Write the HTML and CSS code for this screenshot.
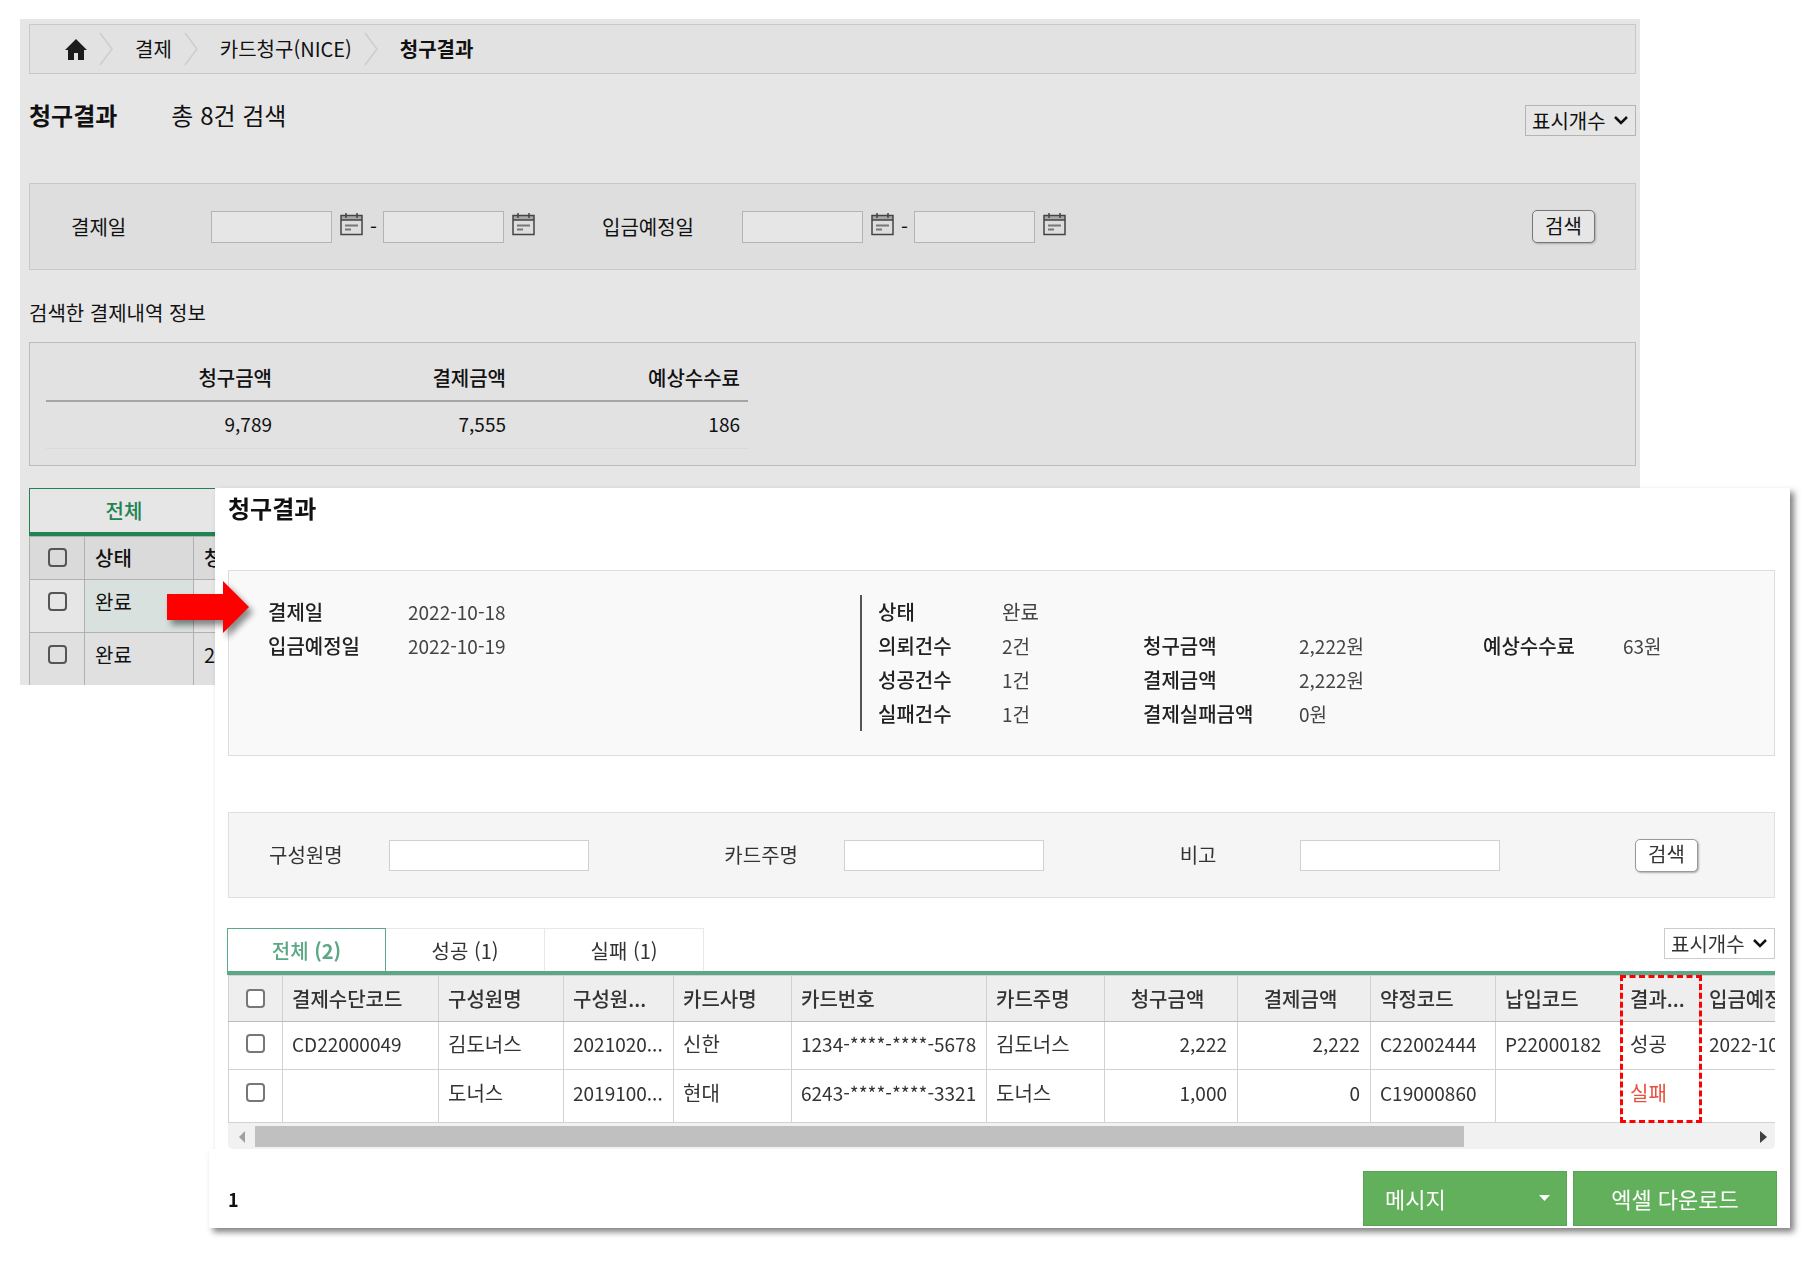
FILE: index.html
```html
<!DOCTYPE html>
<html lang="ko">
<head>
    <meta charset="UTF-8">
    <meta name="viewport" content="width=device-width, initial-scale=1.0">
    <title>청구결과</title>
    <link rel="stylesheet" href="styles.css">
</head>
<body>

<svg class="defs" aria-hidden="true">
    <symbol id="calendar" viewBox="0 0 23 23">
        <rect x="1" y="3" width="21" height="4" fill="#a8a8a8"/>
        <path d="M1 2.5h21v19H1zM1 7h21" fill="none" stroke="#444" stroke-width="1.5"/>
        <path d="M6 0v5M17 0v5" stroke="#444" stroke-width="1.5"/>
        <path d="M5 12.5h13M5 16.5h6" stroke="#777" stroke-width="2"/>
    </symbol>
    <symbol id="sep" viewBox="0 0 14 34">
        <path d="M1 1l12 16L1 33" fill="none" stroke="#cdcdcd" stroke-width="1.5"/>
    </symbol>
</svg>

<!-- 청구 목록 -->
<main class="page">
    <nav class="breadcrumb">
        <a href="#" class="home" aria-label="홈">
            <svg width="22" height="21" viewBox="0 0 22 21"><path d="M11 0L0 11h3v10h6v-7h4v7h6V11h3z" fill="#1c1c1c"/></svg>
        </a>
        <svg class="sep"><use href="#sep"/></svg>
        <a href="#">결제</a>
        <svg class="sep"><use href="#sep"/></svg>
        <a href="#">카드청구(NICE)</a>
        <svg class="sep"><use href="#sep"/></svg>
        <strong>청구결과</strong>
    </nav>

    <div class="title-row">
        <h1>청구결과</h1>
        <span class="count">총 8건 검색</span>
        <select class="page-size" aria-label="표시개수">
            <option>표시개수</option>
        </select>
    </div>

    <form class="date-search">
        <div class="date-field">
            <label for="payFrom">결제일</label>
            <input type="text" id="payFrom">
            <button type="button" class="cal" aria-label="달력"><svg><use href="#calendar"/></svg></button>
            <span class="dash">-</span>
            <input type="text" aria-label="결제일 종료">
            <button type="button" class="cal" aria-label="달력"><svg><use href="#calendar"/></svg></button>
        </div>
        <div class="date-field">
            <label for="depositFrom">입금예정일</label>
            <input type="text" id="depositFrom">
            <button type="button" class="cal" aria-label="달력"><svg><use href="#calendar"/></svg></button>
            <span class="dash">-</span>
            <input type="text" aria-label="입금예정일 종료">
            <button type="button" class="cal" aria-label="달력"><svg><use href="#calendar"/></svg></button>
        </div>
        <button type="button" class="search-btn">검색</button>
    </form>

    <p class="info-title">검색한 결제내역 정보</p>
    <div class="info-box">
        <table class="sum-table">
            <thead>
                <tr><th>청구금액</th><th>결제금액</th><th>예상수수료</th></tr>
            </thead>
            <tbody>
                <tr><td>9,789</td><td>7,555</td><td>186</td></tr>
            </tbody>
        </table>
    </div>

    <div class="page-tabs">
        <button type="button" class="page-tab">전체</button>
    </div>
    <table class="list-table">
        <thead>
            <tr>
                <th class="check"><input type="checkbox" aria-label="전체 선택"></th>
                <th class="state">상태</th>
                <th>청구일</th>
            </tr>
        </thead>
        <tbody>
            <tr>
                <td class="check"><input type="checkbox" aria-label="선택"></td>
                <td class="state selected">완료</td>
                <td></td>
            </tr>
            <tr class="even">
                <td class="check"><input type="checkbox" aria-label="선택"></td>
                <td class="state">완료</td>
                <td>2022</td>
            </tr>
        </tbody>
    </table>
</main>

<!-- 청구결과 상세 창 -->
<section class="popup">
    <div class="popup-body">
        <h2>청구결과</h2>

        <div class="summary">
            <dl class="dates">
                <dt>결제일</dt><dd>2022-10-18</dd>
                <dt>입금예정일</dt><dd>2022-10-19</dd>
            </dl>
            <div class="result">
                <dl class="counts">
                    <dt>상태</dt><dd class="kr">완료</dd>
                    <dt>의뢰건수</dt><dd>2건</dd>
                    <dt>성공건수</dt><dd>1건</dd>
                    <dt>실패건수</dt><dd>1건</dd>
                </dl>
                <dl class="amounts">
                    <dt>청구금액</dt><dd>2,222원</dd>
                    <dt>결제금액</dt><dd>2,222원</dd>
                    <dt>결제실패금액</dt><dd>0원</dd>
                </dl>
                <dl class="fee">
                    <dt>예상수수료</dt><dd>63원</dd>
                </dl>
            </div>
        </div>

        <form class="name-search">
            <div class="name-field">
                <label for="member">구성원명</label>
                <input type="text" id="member">
            </div>
            <div class="name-field">
                <label for="owner">카드주명</label>
                <input type="text" id="owner">
            </div>
            <div class="name-field">
                <label for="note">비고</label>
                <input type="text" id="note">
            </div>
            <button type="button" class="search-btn">검색</button>
        </form>

        <div class="tabs">
            <button type="button" class="tab active">전체 <b>(2)</b></button>
            <button type="button" class="tab">성공 (1)</button>
            <button type="button" class="tab">실패 (1)</button>
            <select class="page-size" aria-label="표시개수">
                <option>표시개수</option>
            </select>
        </div>

        <div class="grid-wrap">
            <table class="grid">
                <colgroup>
                    <col class="w-check"><col class="w-code"><col class="w-member"><col class="w-id">
                    <col class="w-name"><col class="w-card"><col class="w-name"><col class="w-amount">
                    <col class="w-amount"><col class="w-member"><col class="w-member"><col class="w-result"><col class="w-date">
                </colgroup>
                <thead>
                    <tr>
                        <th class="check"><input type="checkbox" aria-label="전체 선택"></th>
                        <th>결제수단코드</th>
                        <th>구성원명</th>
                        <th>구성원...</th>
                        <th>카드사명</th>
                        <th>카드번호</th>
                        <th>카드주명</th>
                        <th class="center">청구금액</th>
                        <th class="center">결제금액</th>
                        <th>약정코드</th>
                        <th>납입코드</th>
                        <th>결과...</th>
                        <th>입금예정일</th>
                    </tr>
                </thead>
                <tbody>
                    <tr>
                        <td class="check"><input type="checkbox" aria-label="선택"></td>
                        <td>CD22000049</td>
                        <td class="kr">김도너스</td>
                        <td>2021020...</td>
                        <td class="kr">신한</td>
                        <td>1234-****-****-5678</td>
                        <td class="kr">김도너스</td>
                        <td class="num">2,222</td>
                        <td class="num">2,222</td>
                        <td>C22002444</td>
                        <td>P22000182</td>
                        <td class="kr">성공</td>
                        <td>2022-10-19</td>
                    </tr>
                    <tr>
                        <td class="check"><input type="checkbox" aria-label="선택"></td>
                        <td></td>
                        <td class="kr">도너스</td>
                        <td>2019100...</td>
                        <td class="kr">현대</td>
                        <td>6243-****-****-3321</td>
                        <td class="kr">도너스</td>
                        <td class="num">1,000</td>
                        <td class="num">0</td>
                        <td>C19000860</td>
                        <td></td>
                        <td class="kr fail">실패</td>
                        <td></td>
                    </tr>
                </tbody>
            </table>
            <div class="highlight"></div>
        </div>
        <div class="scrollbar">
            <svg width="27" height="26"><path d="M17 8v12l-6-6z" fill="#a0a0a0"/></svg>
            <div class="track"><div class="thumb"></div></div>
            <svg width="27" height="26"><path d="M12 8v12l7-6z" fill="#404040"/></svg>
        </div>
    </div>

    <div class="popup-foot">
        <strong class="pager">1</strong>
        <button type="button" class="green-btn message">메시지
            <svg width="11" height="6"><path d="M0 0h11L5.500 6z" fill="#fff"/></svg>
        </button>
        <button type="button" class="green-btn">엑셀 다운로드</button>
    </div>
</section>

<svg class="arrow" width="82" height="52" viewBox="0 0 82 52">
    <path d="M0 13h56V0l26 26-26 26V39H0z" fill="#f00"/>
</svg>

</body>
</html>
```
FILE: styles.css
```css
* {
    box-sizing: border-box;
}
body {
    margin: 0;
    min-height: 100vh;
    position: relative;
    overflow: hidden;
    background-color: #fff;
    color: #111;
    font-family: "Noto Sans CJK KR", "Noto Sans", sans-serif;
    font-size: 20px;
    line-height: 28px;
}
button, input, select {
    font-family: inherit;
    font-size: 20px;
    color: inherit;
    margin: 0;
}
.defs {
    display: none;
}
a {
    color: inherit;
    text-decoration: none;
}
h1, h2, p, dl, dd {
    margin: 0;
}
table {
    border-collapse: collapse;
    table-layout: fixed;
}

/* page behind */
.page {
    margin: 19px 167px 0 20px;
    padding: 5px 4px 0 9px;
    height: 666px;
    overflow: hidden;
    background-color: #e6e6e6;
}
.breadcrumb {
    display: flex;
    align-items: center;
    height: 50px;
    padding-left: 35px;
    border: 1px solid #c8c8c8;
    background-color: #e2e2e2;
}
.home {
    display: flex;
}
.sep {
    width: 14px;
    height: 34px;
    margin: 0 22px 0 12px;
}
.title-row {
    display: flex;
    align-items: flex-start;
    height: 109px;
    padding-top: 24px;
    line-height: 34px;
}
h1, h2 {
    font-size: 24px;
    font-weight: 700;
}
.count {
    margin-left: 54px;
    font-size: 24px;
}
.page-size {
    appearance: none;
    width: 111px;
    height: 31px;
    margin-left: auto;
    padding: 0 6px 2px;
    border: 1px solid #b4b4b4;
    border-radius: 0;
    background: #e6e6e6 url("data:image/svg+xml,%3Csvg xmlns='http://www.w3.org/2000/svg' width='14' height='9'%3E%3Cpath d='M1 1l6 6 6-6' fill='none' stroke='%23111' stroke-width='2.500'/%3E%3C/svg%3E") no-repeat right 7px center;
}
.title-row .page-size {
    margin-top: 7px;
}
.date-search, .name-search {
    display: flex;
    align-items: center;
    height: 87px;
    border: 1px solid #c8c8c8;
    background-color: #dedede;
}
.date-search {
    padding: 0 40px 0 41px;
}
.date-field {
    display: flex;
    align-items: center;
    flex: 0 0 531px;
}
.date-field label {
    width: 140px;
}
.date-field input {
    width: 121px;
    height: 32px;
    border: 1px solid #b4b4b4;
    background-color: #e6e6e6;
}
.cal {
    width: 23px;
    height: 23px;
    margin: 0 7px 4px 8px;
    padding: 0;
    border: 0;
    background: none;
}
.cal svg {
    display: block;
    width: 23px;
    height: 23px;
}
.dash {
    width: 13px;
}
.search-btn {
    width: 63px;
    height: 33px;
    margin-left: auto;
    padding: 0 0 2px;
    border: 1px solid #777;
    border-radius: 5px;
    background-color: #e6e6e6;
    box-shadow: 1px 1px 2px #aaa;
    line-height: 28px;
}
.info-title {
    padding: 29px 0 15px;
}
.info-box {
    padding: 14px 16px 16px;
    border: 1px solid #bdbdbd;
    background-color: #e2e2e2;
}
.sum-table {
    width: 702px;
}
.sum-table th, .sum-table td {
    height: 47px;
    padding: 0 8px 2px;
    text-align: right;
    border-bottom: 1px solid #dadada;
}
.sum-table th {
    height: 44px;
    font-weight: 500;
    border-bottom: 2px solid #a5a5a5;
}
.sum-table td {
    font-size: 19px;
}
.page-tabs {
    margin-top: 22px;
    border-bottom: 4px solid #218252;
}
.page-tab {
    display: block;
    width: 190px;
    height: 44px;
    border: 1px solid #218252;
    border-bottom: 0;
    background-color: #e6e6e6;
    color: #218252;
    font-weight: 500;
}
.list-table {
    width: 100%;
}
.list-table th, .list-table td {
    height: 53px;
    padding: 8px 10px;
    border: 1px solid #b0b0b0;
    text-align: left;
    vertical-align: top;
}
.list-table th {
    height: 43px;
    padding: 7px 10px;
    background-color: #dadada;
    font-weight: 500;
}
.list-table .check {
    width: 55px;
}
.list-table .state {
    width: 109px;
}
.list-table .selected {
    background-color: #d8e1dd;
}
.list-table .even {
    background-color: #e0e0e0;
}
.page .check, .grid .check {
    padding-left: 0;
    padding-right: 0;
    text-align: center;
}
.check input {
    appearance: none;
    width: 19px;
    height: 19px;
    margin: 4px 0;
    border: 2px solid #555;
    border-radius: 4px;
    vertical-align: top;
}

/* detail window */
.popup {
    position: absolute;
    top: 488px;
    left: 215px;
    right: 17px;
    color: #333;
    filter: drop-shadow(4px 4px 3px rgba(0,0,0,0.5));
}
.popup-body {
    padding: 0 15px 0 13px;
    background-color: #fff;
}
.popup h2 {
    line-height: 40px;
    color: #111;
}
.summary {
    display: flex;
    margin-top: 42px;
    padding: 24px 0 24px 39px;
    border: 1px solid #ddd;
    background-color: #f9f9f9;
    line-height: 34px;
}
.summary dl {
    display: grid;
    align-content: start;
}
.summary dt {
    font-weight: 500;
    color: #222;
}
.summary dd {
    font-size: 19px;
    color: #444;
}
.summary dd.kr {
    font-size: 20px;
}
.dates {
    flex: 0 0 592px;
    grid-template-columns: 140px 1fr;
}
.result {
    display: flex;
    flex: 1;
    padding-left: 16px;
    border-left: 2px solid #555;
}
.counts {
    grid-template-columns: 124px 141px;
}
.amounts {
    grid-template-columns: 156px 184px;
}
.fee {
    grid-template-columns: 140px 1fr;
}
.amounts, .fee {
    padding-top: 34px;
}
.name-search {
    height: 86px;
    margin-top: 56px;
    padding: 0 76px 0 40px;
    border-color: #e0e0e0;
    background-color: #f5f5f5;
}
.name-field {
    display: flex;
    align-items: center;
    flex: 1;
}
.name-field label {
    width: 120px;
}
.name-field input {
    width: 200px;
    height: 31px;
    border: 1px solid #d0d0d0;
    background-color: #fff;
}
.popup .search-btn {
    background-color: #fff;
    border-color: #999;
}
.tabs {
    display: flex;
    align-items: flex-start;
    margin: 30px 0 0 -1px;
    border-bottom: 4px solid #5aa885;
}
.tab {
    width: 159px;
    height: 43px;
    padding: 0;
    border: 1px solid #e8e8e8;
    border-width: 1px 1px 0 0;
    background-color: #fff;
}
.tab.active {
    border: 1px solid #5aa885;
    border-bottom: 0;
    color: #5aa885;
    font-weight: 500;
}
.popup .page-size {
    border-color: #ccc;
    background-color: #fff;
}
.grid-wrap {
    position: relative;
    overflow: hidden;
}
.grid {
    width: 1601px;
}
.w-check { width: 54px; }
.w-code { width: 156px; }
.w-member { width: 125px; }
.w-id { width: 110px; }
.w-name { width: 118px; }
.w-card { width: 195px; }
.w-amount { width: 133px; }
.w-result { width: 79px; }
.w-date { width: 130px; }
.grid th, .grid td {
    height: 48px;
    padding: 0 10px 4px 9px;
    border: 1px solid #d2d2d2;
    text-align: left;
    white-space: nowrap;
    font-size: 19px;
}
.grid th {
    height: 46px;
    padding-bottom: 0;
    background-color: #eee;
    font-size: 20px;
    font-weight: 500;
    border-bottom-color: #bbb;
}
.grid tr:last-child td {
    height: 53px;
    padding-bottom: 6px;
}
.grid thead tr:last-child th {
    padding-bottom: 0;
}
.grid td.kr {
    font-size: 20px;
}
.grid .center {
    padding-right: 16px;
    text-align: center;
}
.grid .num {
    text-align: right;
}
.grid .fail {
    color: #e8503c;
}
.grid .check input {
    border-color: #777;
    background-color: #fff;
}
/* red frame over the result column */
.highlight {
    position: absolute;
    top: 0;
    bottom: 0;
    left: 1392px;
    width: 82px;
    border: 3px dashed #f00;
}
.scrollbar {
    display: flex;
    height: 26px;
    background-color: #f1f1f1;
    border-radius: 0 0 5px 5px;
}
.track {
    flex: 1;
    padding: 3px 0 2px;
}
.thumb {
    width: 81%;
    height: 21px;
    background-color: #c0c0c0;
}
.popup-foot {
    display: flex;
    align-items: center;
    gap: 6px;
    margin-left: -6px;
    padding: 22px 13px 2px 19px;
    background-color: #fff;
}
.pager {
    margin-right: auto;
    font-size: 18px;
    color: #111;
}
.green-btn {
    width: 204px;
    height: 55px;
    padding: 0 0 2px;
    border: 1px solid #58a651;
    background-color: #63b05c;
    color: #fff;
    font-size: 22px;
}
.message {
    display: flex;
    align-items: center;
    justify-content: space-between;
    padding: 0 16px 2px 21px;
}

.arrow {
    position: absolute;
    top: 581px;
    left: 167px;
    overflow: visible;
    filter: drop-shadow(4px 5px 3px rgba(0,0,0,0.45));
}
```
